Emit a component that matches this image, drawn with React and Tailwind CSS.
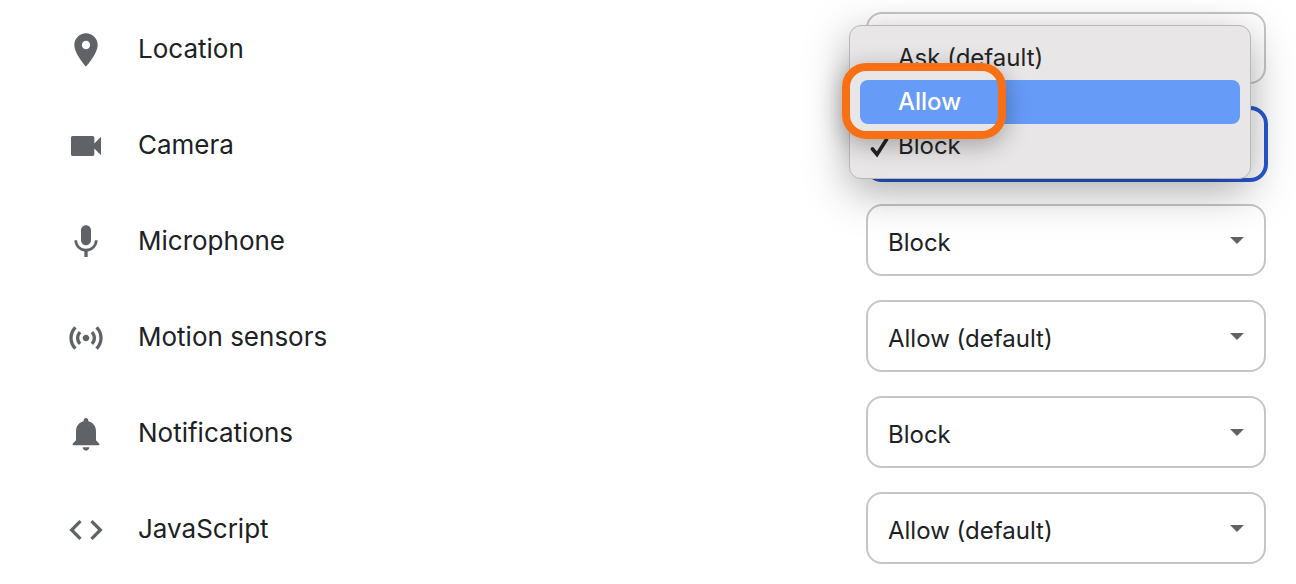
import React, { useState } from 'react';
import {
  MdCode,
  MdLocationOn,
  MdMic,
  MdSensors,
  MdVideocam,
} from 'react-icons/md';

// Bell with a round dome, fuller at the shoulders than the stock one
function BellIcon(props) {
  return (
    <svg viewBox="0 0 24 24" fill="currentColor" {...props}>
      <path d="M12 2.4c-.83 0-1.4.6-1.4 1.4v.6C7.9 5 6 7.3 6 10.2v5.6L4 17.9v.9h16v-.9l-2-2.1v-5.6c0-2.9-1.9-5.2-4.6-5.8v-.6c0-.8-.57-1.4-1.4-1.4z" />
      <path d="M12 22c1.1 0 2-.9 2-2h-4c0 1.1.9 2 2 2z" />
    </svg>
  );
}

const PERMISSIONS = [
  { id: 'location', label: 'Location', icon: MdLocationOn, fallback: 'Ask', value: 'Ask (default)' },
  { id: 'camera', label: 'Camera', icon: MdVideocam, fallback: 'Ask', value: 'Block' },
  { id: 'microphone', label: 'Microphone', icon: MdMic, fallback: 'Ask', value: 'Block' },
  { id: 'sensors', label: 'Motion sensors', icon: MdSensors, fallback: 'Allow', value: 'Allow (default)' },
  { id: 'notifications', label: 'Notifications', icon: BellIcon, fallback: 'Ask', value: 'Block' },
  { id: 'javascript', label: 'JavaScript', icon: MdCode, fallback: 'Allow', value: 'Allow (default)' },
];

const MENU_OPTIONS = ['Ask (default)', 'Allow', 'Block'];

/**
 * Popup list for an open select. The marked option gets an
 * orange ring around its name.
 */
function OptionMenu({ value, active, marked, onPick }) {
  return (
    <div
      role="listbox"
      aria-label="Camera permission"
      className="absolute -top-[83px] -left-[17px] right-[15px] z-10 rounded-xl border border-[#b9b8b8] bg-[#e8e6e7] p-[10px] shadow-[0_12px_44px_rgba(0,0,0,0.34)]"
    >
      {MENU_OPTIONS.map((option) => (
        <button
          key={option}
          type="button"
          role="option"
          aria-selected={option === value}
          onClick={() => onPick(option)}
          className={
            option === active
              ? 'relative z-10 flex h-11 w-full items-center rounded-lg bg-[#669bf8] text-left text-2xl font-medium text-white'
              : 'flex h-11 w-full items-center rounded-lg text-left text-2xl text-[#232323]'
          }
        >
          <span className="flex w-[38px] shrink-0 justify-center">
            {option === value && (
              <svg viewBox="0 0 20 20" className="mt-1 size-5" fill="none" aria-hidden="true">
                <path
                  d="M3.5 11 8 16.5 17.5 1.5"
                  stroke="currentColor"
                  strokeWidth="3.6"
                  strokeLinecap="round"
                />
              </svg>
            )}
          </span>
          {option}
          {option === marked && (
            <span className="pointer-events-none absolute -top-[17px] -left-[18px] h-[76px] w-[164px] rounded-3xl border-8 border-[#f86f14] shadow-[0_6px_24px_rgba(0,0,0,0.3)]" />
          )}
        </button>
      ))}
    </div>
  );
}

function PermissionRow({ permission, open, onChange }) {
  const { id, label, icon: Icon, fallback, value } = permission;
  const options = ['Ask', 'Allow', 'Block'].map((o) => (o === fallback ? `${o} (default)` : o));

  return (
    <div className="flex h-24 items-center pr-[30px] pl-[66px]">
      <Icon className="mt-1 size-10 shrink-0 text-[#5f6368]" aria-hidden="true" />
      <label htmlFor={id} className="ml-8 flex-1 text-[26px] text-[#202124]">
        {label}
      </label>
      <div className="relative w-[400px]">
        <select
          id={id}
          value={value}
          onChange={(e) => onChange(id, e.target.value)}
          className={
            open
              ? 'h-[72px] w-full appearance-none rounded-2xl border-2 border-transparent bg-white px-5 pt-1.5 text-2xl text-[#202124] outline-4 -outline-offset-2 outline-[#2759d2]'
              : 'h-[72px] w-full appearance-none rounded-2xl border-2 border-[#c6c6c6] bg-white px-5 pt-1.5 text-2xl text-[#202124]'
          }
        >
          {options.map((option) => (
            <option key={option}>{option}</option>
          ))}
        </select>
        <svg
          viewBox="0 0 14 7"
          className="pointer-events-none absolute top-[33px] right-[22px] h-[7px] w-[14px] fill-[#5f6368]"
          aria-hidden="true"
        >
          <path d="M0 0h14L7 7z" />
        </svg>
        {open && (
          <OptionMenu
            value={value}
            active="Allow"
            marked="Allow"
            onPick={(option) => onChange(id, option)}
          />
        )}
      </div>
    </div>
  );
}

function App() {
  const [permissions, setPermissions] = useState(PERMISSIONS);
  const [openId, setOpenId] = useState('camera');

  const handleChange = (id, value) => {
    setPermissions(permissions.map((p) => (p.id === id ? { ...p, value } : p)));
    setOpenId(null);
  };

  return (
    <main className="min-h-screen bg-white font-['Inter',sans-serif]">
      {permissions.map((permission) => (
        <PermissionRow
          key={permission.id}
          permission={permission}
          open={permission.id === openId}
          onChange={handleChange}
        />
      ))}
    </main>
  );
}

export default App;
